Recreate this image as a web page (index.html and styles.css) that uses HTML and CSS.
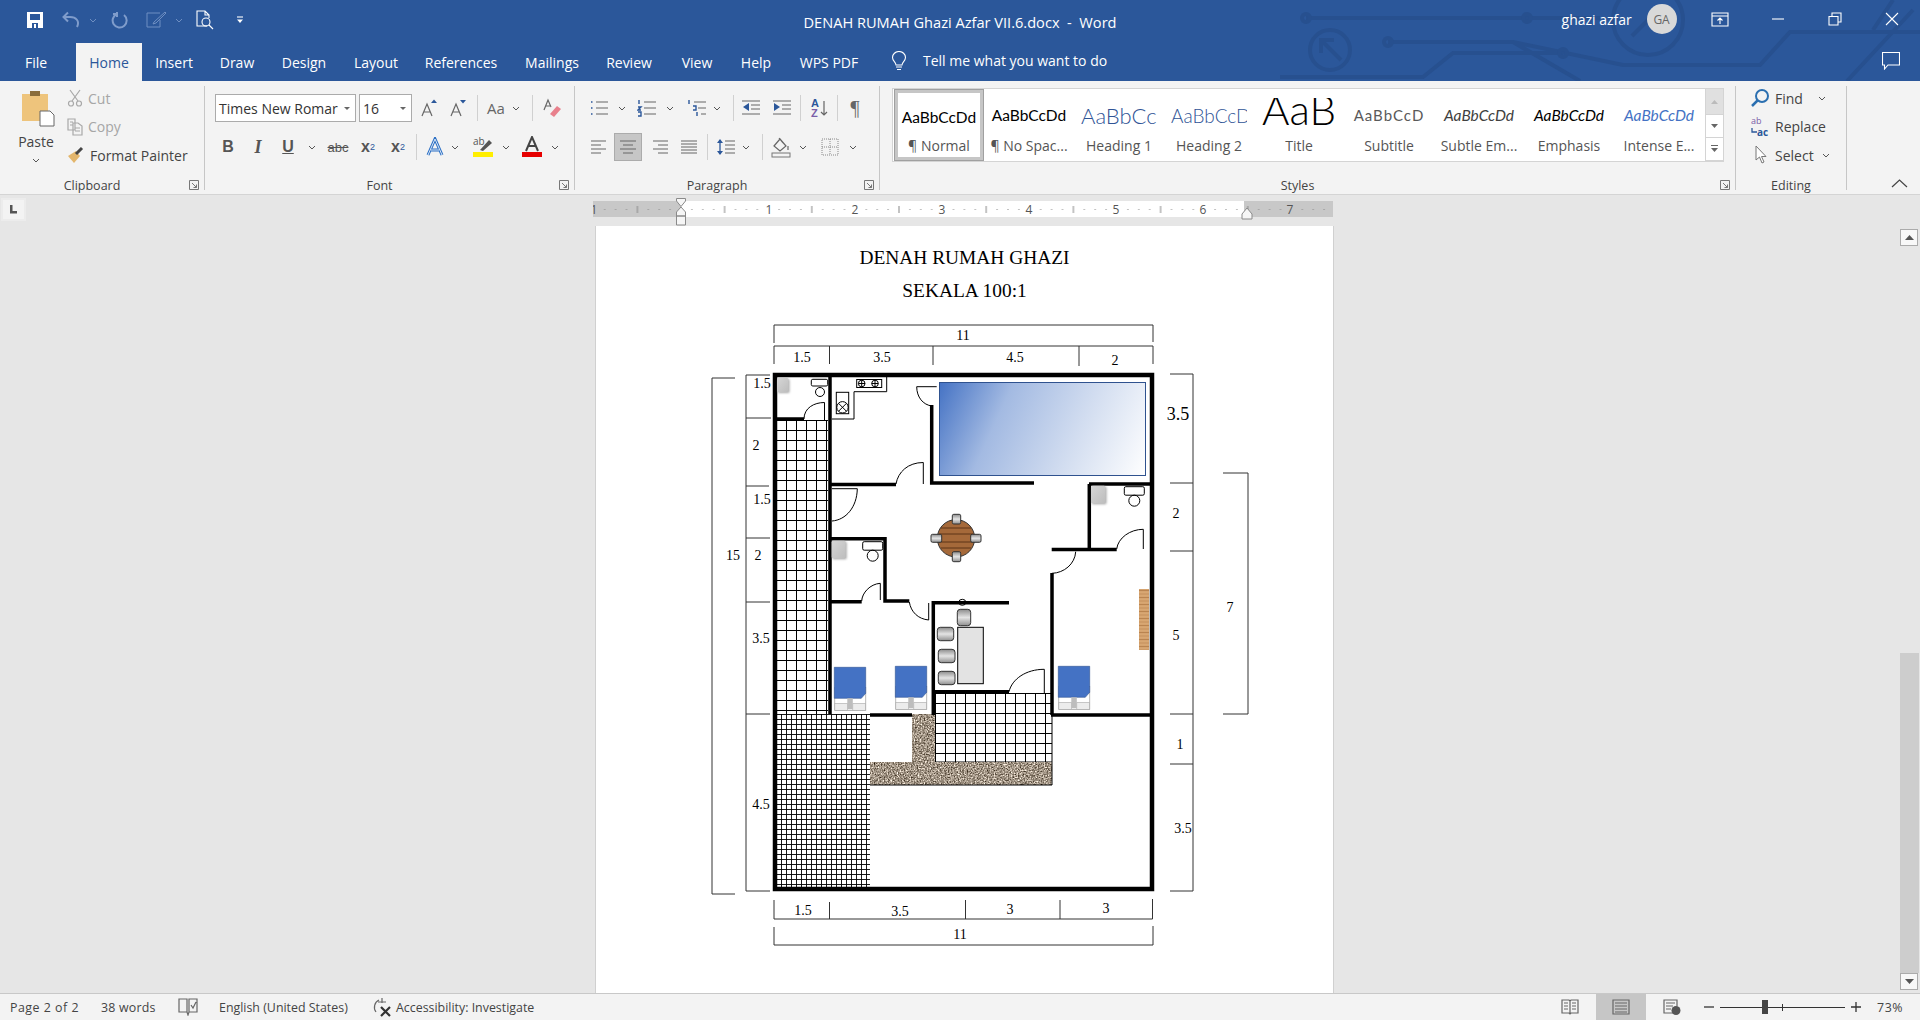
FILE: index.html
```html
<!DOCTYPE html>
<html>
  <head>
    <meta charset="utf-8">
    <title>DENAH RUMAH Ghazi Azfar VII.6.docx - Word</title>
    <link rel="stylesheet" href="styles.css">
  </head>
  <body>
    <header class="titlebar">
      <svg class="circuit" viewBox="1280 0 640 81" width="640" height="81">
        <path d="M1306 18H1600M1388 42H1513L1580 81M1280 77H1423L1453 53H1563M1513 42L1623 65H1760L1790 32H1920M1847 81L1913 10M1873 30L1893 0"/>
        <circle cx="1306" cy="18" r="4"/><circle cx="1527" cy="18" r="4"/><circle cx="1388" cy="42" r="4"/><circle cx="1563" cy="53" r="4"/>
        <circle cx="1330" cy="50" r="20" stroke-width="5"/>
        <path d="M1341 60L1323 42M1321 53V40H1334" stroke-width="5"/>
        <circle cx="1648" cy="20" r="35" stroke-width="7"/>
        <path d="M1632 36L1660 8" stroke-width="6"/>
      </svg>

      <div class="title-row">
        <div class="qat">
          <svg class="q-save" width="18" height="18" viewBox="0 0 18 18"><path class="w-fill" d="M1 1H17V17H1Z"/><path class="b-fill" d="M4 3H14V9H4ZM6 12H12V17H6Z"/><path class="w-fill" d="M8 13H10V17H8Z"/></svg>
          <svg class="q-undo" width="20" height="18" viewBox="0 0 20 18"><path class="dim-line" d="M16 16C19 10 15 6 9 6H3M7 1.5L2.5 6L7 10.5"/></svg>
          <svg class="chev q-c1" viewBox="0 0 8 5"><path class="dim-line" d="M1 1L4 4L7 1"/></svg>
          <svg class="q-redo" width="18" height="18" viewBox="0 0 18 18"><path class="dim-line" d="M6 3A7 7 0 1 0 13 4M6 1V6M2 3H6"/></svg>
          <svg class="q-pen" width="21" height="18" viewBox="0 0 21 18"><path class="dim-thin" d="M14 2H1V16H14V9M8 11L19 1L20 2L10 12L7 13Z"/></svg>
          <svg class="chev q-c2" viewBox="0 0 8 5"><path class="dim-line" d="M1 1L4 4L7 1"/></svg>
          <svg class="q-prev" width="18" height="20" viewBox="0 0 18 20"><path class="w-thin" d="M11 16H1V1H9L13 5V8M9 1V5H13"/><circle class="w-thin" cx="10" cy="12" r="4"/><path class="w-thin" d="M13 15L17 19"/></svg>
          <svg class="q-more" width="8" height="8" viewBox="0 0 8 8"><path class="w-thin" d="M1 1H7"/><path class="w-fill" d="M1 3.500H7L4 7Z"/></svg>
        </div>
        <div class="doc-title">DENAH RUMAH Ghazi Azfar VII.6.docx&nbsp; - &nbsp;Word</div>
        <div class="account">
          <span class="user-name">ghazi azfar</span>
          <span class="avatar">GA</span>
          <svg class="win-share" width="18" height="15" viewBox="0 0 18 15"><path class="w-thin" d="M1 1H17V14H1ZM1 4H17M9 12V6M6.500 8.500L9 6L11.500 8.500" stroke-width="1.300"/></svg>
          <svg class="win-min" width="12" height="2" viewBox="0 0 12 2"><path class="w-thin" d="M0 1H12"/></svg>
          <svg class="win-max" width="14" height="14" viewBox="0 0 14 14"><path class="w-thin" d="M1 4.500H10V13H1ZM4 4.500V1H13V10H10" stroke-width="1.200"/></svg>
          <svg class="win-close" width="14" height="14" viewBox="0 0 14 14"><path class="w-thin" d="M1 1L13 13M13 1L1 13" stroke-width="1.300"/></svg>
        </div>
      </div>

      <nav class="tab-row">
        <span class="tab tab-file">File</span>
        <span class="tab active">Home</span>
        <span class="tab">Insert</span>
        <span class="tab">Draw</span>
        <span class="tab">Design</span>
        <span class="tab">Layout</span>
        <span class="tab">References</span>
        <span class="tab">Mailings</span>
        <span class="tab">Review</span>
        <span class="tab">View</span>
        <span class="tab">Help</span>
        <span class="tab">WPS PDF</span>
        <svg class="bulb" width="16" height="20" viewBox="0 0 16 20"><path class="w-thin" d="M5 14C5 11 1.500 10 1.500 6.500A6.500 6 0 0 1 14.500 6.500C14.500 10 11 11 11 14ZM5 16H11M6 18.500H10"/></svg>
        <span class="tell-me">Tell me what you want to do</span>
        <svg class="comment" width="18" height="18" viewBox="0 0 18 18"><path class="w-thin" d="M.5 .5H17.500V13H6L2.500 17V13H.5Z"/></svg>
      </nav>
    </header>

    <section class="ribbon">
      <div class="group g-clip">
        <div class="clip-body">
          <div class="paste">
            <svg class="paste-ic" width="34" height="38" viewBox="0 0 34 38"><path d="M1 5H27V32H1Z" fill="#eec47c"/><path d="M9 2H19V7H9Z" fill="#8a6d3b"/><path d="M19 22H29L33 26V37H19Z" fill="#fff" stroke="#666"/></svg>
            <span>Paste</span>
            <svg class="chev" viewBox="0 0 8 5"><path d="M1 1L4 4L7 1"/></svg>
          </div>
          <div class="small-col">
            <div class="small-btn off"><svg width="16" height="18" viewBox="0 0 16 18"><path class="ln-off" d="M3 1L11 12M13 1L5 12"/><circle class="ln-off" cx="4" cy="14.500" r="2.500"/><circle class="ln-off" cx="12" cy="14.500" r="2.500"/></svg><span>Cut</span></div>
            <div class="small-btn off"><svg width="16" height="18" viewBox="0 0 16 18"><path class="ln-off" d="M1 1H8V12H1ZM6 5H11L15 8V17H6ZM3 4H6M3 7H6M8 10H13M8 13H13"/></svg><span>Copy</span></div>
            <div class="small-btn"><svg width="18" height="18" viewBox="0 0 18 18"><path d="M1 10L9 5L13 10L7 17Z" fill="#e3b66c"/><path d="M9 8L15 2" stroke="#444" stroke-width="3"/></svg><span>Format Painter</span></div>
          </div>
        </div>
        <div class="group-label">Clipboard</div>
        <svg class="launcher" viewBox="0 0 10 10"><path d="M.5 .5H9.500V9.500H.5ZM3 3L7.500 7.500M7.500 4.500V7.500H4.500"/></svg>
      </div>

      <div class="group g-font">
        <div class="rows">
          <div class="row row-combo">
            <div class="combo c-name"><span>Times New Romar</span><i class="drop"></i></div>
            <div class="combo c-size"><span>16</span><i class="drop"></i></div>
            <div class="ib m7"><svg width="18" height="18" viewBox="0 0 18 18"><path class="ln" d="M2 17L7 5L12 17M4 13H10"/><path d="M11 4L14 0.500L17 4Z" fill="#2b579a"/></svg></div>
            <div class="ib m9"><svg width="18" height="18" viewBox="0 0 18 18"><path class="ln" d="M2 17L7 5L12 17M4 13H10"/><path d="M11 1L14 4.500L17 1Z" fill="#2b579a"/></svg></div>
            <i class="sep m9"></i>
            <div class="ib m8 txt-ib">Aa</div>
            <svg class="chev m6" viewBox="0 0 8 5"><path d="M1 1L4 4L7 1"/></svg>
            <i class="sep m12"></i>
            <div class="ib m9"><svg width="20" height="20" viewBox="0 0 20 20"><path class="ln" d="M2 12L6 2L9 9M4 8H8"/><path d="M8 16L15 8L19 11L12 19Z" fill="#e8808c"/></svg></div>
          </div>
          <div class="row">
            <div class="ib m13 fmt b">B</div>
            <div class="ib m10 fmt i">I</div>
            <div class="ib m10 fmt u">U</div>
            <svg class="chev m10" viewBox="0 0 8 5"><path d="M1 1L4 4L7 1"/></svg>
            <div class="ib m12 fmt s">abc</div>
            <div class="ib m10 fmt b">x<sub>2</sub></div>
            <div class="ib m10 fmt b">x<sup>2</sup></div>
            <i class="sep m8"></i>
            <div class="ib m8"><svg width="20" height="20" viewBox="0 0 20 20"><path d="M3 18L10 2L17 18M6 13H14" fill="none" stroke="#2b6fc4" stroke-width="3"/><path d="M3 18L10 2L17 18M6 13H14" fill="none" stroke="#dbe7f6" stroke-width="1"/></svg></div>
            <svg class="chev m6" viewBox="0 0 8 5"><path d="M1 1L4 4L7 1"/></svg>
            <div class="ib m14"><svg width="22" height="22" viewBox="0 0 22 22"><text class="hl-ab" x="1" y="9">ab</text><path d="M8 14L17 4L20 7L11 15Z" fill="#555"/><rect x="1" y="16" width="20" height="5" fill="#ffee00"/></svg></div>
            <svg class="chev m9" viewBox="0 0 8 5"><path d="M1 1L4 4L7 1"/></svg>
            <div class="ib m12"><svg width="22" height="22" viewBox="0 0 22 22"><path d="M5 15L11 1L17 15M7 10H15" fill="none" stroke="#444" stroke-width="2"/><rect x="1" y="16" width="20" height="5" fill="#e60000"/></svg></div>
            <svg class="chev m9" viewBox="0 0 8 5"><path d="M1 1L4 4L7 1"/></svg>
          </div>
        </div>
        <div class="group-label">Font</div>
        <svg class="launcher" viewBox="0 0 10 10"><path d="M.5 .5H9.500V9.500H.5ZM3 3L7.500 7.500M7.500 4.500V7.500H4.500"/></svg>
      </div>

      <div class="group g-para">
        <div class="rows">
          <div class="row">
            <div class="ib m14"><svg width="20" height="18" viewBox="0 0 20 18"><path class="ln" d="M7 3H19M7 9H19M7 15H19"/><path class="dots" d="M2 3H3.500M2 9H3.500M2 15H3.500"/></svg></div>
            <svg class="chev m9" viewBox="0 0 8 5"><path d="M1 1L4 4L7 1"/></svg>
            <div class="ib m11"><svg width="20" height="18" viewBox="0 0 20 18"><path class="ln" d="M7 3H19M7 9H19M7 15H19"/><path class="dots" d="M2 1V5M1 8H4L1 11H4M1 13H4V17H1"/></svg></div>
            <svg class="chev m9" viewBox="0 0 8 5"><path d="M1 1L4 4L7 1"/></svg>
            <div class="ib m13"><svg width="20" height="18" viewBox="0 0 20 18"><path class="ln" d="M7 3H19M11 9H19M14 15H19"/><path class="dots" d="M2 1V5M6 7H9V11H6M10 13V17"/></svg></div>
            <svg class="chev m6" viewBox="0 0 8 5"><path d="M1 1L4 4L7 1"/></svg>
            <i class="sep m12"></i>
            <div class="ib m7"><svg width="20" height="18" viewBox="0 0 20 18"><path class="ln" d="M1 2H19M10 6H19M10 10H19M1 15H19"/><path d="M8 4V12L2 8Z" fill="#2b579a"/></svg></div>
            <div class="ib m11"><svg width="20" height="18" viewBox="0 0 20 18"><path class="ln" d="M1 2H19M10 6H19M10 10H19M1 15H19"/><path d="M2 4V12L8 8Z" fill="#2b579a"/></svg></div>
            <i class="sep m8"></i>
            <div class="ib m9"><svg width="20" height="20" viewBox="0 0 20 20"><text class="az a" x="1" y="9">A</text><text class="az z" x="1" y="19">Z</text><path class="ln" d="M14 3V17M11 14L14 17L17 14"/></svg></div>
            <i class="sep m7"></i>
            <div class="ib m7 pilcrow">¶</div>
          </div>
          <div class="row">
            <div class="ib m14"><svg width="18" height="14" viewBox="0 0 18 14"><path class="ln" d="M1 1H16M1 5H11M1 9H16M1 13H11"/></svg></div>
            <div class="ib on m5"><svg width="18" height="14" viewBox="0 0 18 14"><path class="ln" d="M1 1H17M4 5H14M1 9H17M4 13H14"/></svg></div>
            <div class="ib m8"><svg width="18" height="14" viewBox="0 0 18 14"><path class="ln" d="M2 1H17M7 5H17M2 9H17M7 13H17"/></svg></div>
            <div class="ib m9"><svg width="18" height="14" viewBox="0 0 18 14"><path class="ln" d="M1 1H17M1 4H17M1 7H17M1 10H17M1 13H17"/></svg></div>
            <i class="sep m8"></i>
            <div class="ib m8"><svg width="20" height="18" viewBox="0 0 20 18"><path class="ln" d="M9 3H19M9 7H19M9 11H19M9 15H19"/><path class="blue-ln" d="M4 2V16"/><path d="M1 5L4 1L7 5ZM1 13L4 17L7 13Z" fill="#2b579a"/></svg></div>
            <svg class="chev m6" viewBox="0 0 8 5"><path d="M1 1L4 4L7 1"/></svg>
            <i class="sep m12"></i>
            <div class="ib m8"><svg width="20" height="22" viewBox="0 0 20 22"><path class="ln" d="M3 10L9 3L15 10L9 15ZM8 2L12 7M17 10V14"/><rect x="1" y="17" width="18" height="4" fill="none" stroke="#777"/></svg></div>
            <svg class="chev m8" viewBox="0 0 8 5"><path d="M1 1L4 4L7 1"/></svg>
            <div class="ib m13"><svg width="18" height="18" viewBox="0 0 18 18"><path class="dotted" d="M1 1H17V17H1ZM9 1V17M1 9H17"/></svg></div>
            <svg class="chev m9" viewBox="0 0 8 5"><path d="M1 1L4 4L7 1"/></svg>
          </div>
        </div>
        <div class="group-label">Paragraph</div>
        <svg class="launcher" viewBox="0 0 10 10"><path d="M.5 .5H9.500V9.500H.5ZM3 3L7.500 7.500M7.500 4.500V7.500H4.500"/></svg>
      </div>

      <div class="group g-styles">
        <div class="gallery">
          <div class="style-item selected"><span class="pv pv-normal">AaBbCcDd</span><span class="st-name">¶ Normal</span></div>
          <div class="style-item"><span class="pv pv-normal">AaBbCcDd</span><span class="st-name">¶ No Spac...</span></div>
          <div class="style-item"><span class="pv pv-h1">AaBbCc</span><span class="st-name">Heading 1</span></div>
          <div class="style-item"><span class="pv pv-h2">AaBbCcD</span><span class="st-name">Heading 2</span></div>
          <div class="style-item"><span class="pv pv-title">AaB</span><span class="st-name">Title</span></div>
          <div class="style-item"><span class="pv pv-sub">AaBbCcD</span><span class="st-name">Subtitle</span></div>
          <div class="style-item"><span class="pv pv-em pv-subtle">AaBbCcDd</span><span class="st-name">Subtle Em...</span></div>
          <div class="style-item"><span class="pv pv-em">AaBbCcDd</span><span class="st-name">Emphasis</span></div>
          <div class="style-item"><span class="pv pv-em pv-intense">AaBbCcDd</span><span class="st-name">Intense E...</span></div>
          <div class="gallery-arrows">
            <span class="ga ga-up"><svg width="7" height="4" viewBox="0 0 7 4"><path d="M0 4L3.500 0L7 4Z" fill="#bbb"/></svg></span>
            <span class="ga"><svg width="7" height="4" viewBox="0 0 7 4"><path d="M0 0L3.500 4L7 0Z" fill="#666"/></svg></span>
            <span class="ga"><svg width="9" height="8" viewBox="0 0 9 8"><path d="M1 .5H8" stroke="#666"/><path d="M1 3L4.500 7L8 3Z" fill="#666"/></svg></span>
          </div>
        </div>
        <div class="group-label">Styles</div>
        <svg class="launcher" viewBox="0 0 10 10"><path d="M.5 .5H9.500V9.500H.5ZM3 3L7.500 7.500M7.500 4.500V7.500H4.500"/></svg>
      </div>

      <div class="group g-edit">
        <div class="small-col">
          <div class="small-btn"><svg width="20" height="20" viewBox="0 0 20 20"><circle cx="12" cy="8" r="6" fill="none" stroke="#2b6fb0" stroke-width="2"/><path d="M8 12L2 18" stroke="#2b6fb0" stroke-width="2.500"/></svg><span>Find</span><svg class="chev find-chev" viewBox="0 0 8 5"><path d="M1 1L4 4L7 1"/></svg></div>
          <div class="small-btn"><svg width="20" height="20" viewBox="0 0 20 20"><text class="rep-ab" x="1" y="7">ab</text><text class="rep-ac" x="7" y="19">ac</text><path class="blue-ln" d="M2 11V15H7"/></svg><span>Replace</span></div>
          <div class="small-btn"><svg width="20" height="20" viewBox="0 0 20 20"><path class="ln-cur" d="M6 1V15L9.500 12L12 18L14 17L11.500 11.500H16Z"/></svg><span>Select</span><svg class="chev sel-chev" viewBox="0 0 8 5"><path d="M1 1L4 4L7 1"/></svg></div>
        </div>
        <div class="group-label plain">Editing</div>
      </div>

      <svg class="collapse" width="17" height="9" viewBox="0 0 17 9"><path d="M1 8L8.500 1L16 8" fill="none" stroke="#444" stroke-width="1.200"/></svg>
    </section>

    <main class="workspace">
      <div class="ruler-row">
        <div class="tab-stop"><svg width="9" height="9" viewBox="0 0 9 9"><path d="M1 0H3.500V6H8V8.500H1Z" fill="#555"/></svg></div>
        <svg class="ruler" width="745" height="31" viewBox="593 195 745 31">
          <defs>
            <pattern id="ticks" x="681" y="201" width="87.2" height="16" patternUnits="userSpaceOnUse">
              <path class="tick" d="M10.900 8v1M21.800 8v1M32.700 8v1M43.600 5v7M54.500 8v1M65.400 8v1M76.300 8v1"/>
            </pattern>
          </defs>
          <rect x="593" y="201" width="740" height="16" fill="#c8c8c8"/>
          <rect x="681" y="201" width="563" height="16" fill="#fff"/>
          <rect x="593" y="201" width="740" height="16" fill="url(#ticks)"/>
          <g class="ruler-num">
            <text x="594" y="214">1</text><text x="769" y="214">1</text><text x="855" y="214">2</text><text x="942" y="214">3</text><text x="1029" y="214">4</text><text x="1116" y="214">5</text><text x="1203" y="214">6</text><text x="1290" y="214">7</text>
          </g>
          <path class="marker" d="M676.500 198.500H685.500V201L681 206.500L676.500 201ZM676.500 216V212L681 207L685.500 212V216ZM676.500 216H685.500V225H676.500Z"/>
          <path class="marker" d="M1247 208L1252 214V219H1242V214Z"/>
        </svg>
      </div>

      <div class="doc-row">
        <div class="page">
          <svg class="plan" width="737" height="767" viewBox="596 226 737 767">
            <defs>
              <pattern id="tile" x="776" y="420" width="10" height="10" patternUnits="userSpaceOnUse"><path d="M0 .5H10M.5 0V10" stroke="#000"/></pattern>
              <pattern id="tile2" x="935" y="693" width="10" height="10" patternUnits="userSpaceOnUse"><path d="M0 .5H10M.5 0V10" stroke="#000"/></pattern>
              <pattern id="fine" x="776" y="714" width="5" height="5" patternUnits="userSpaceOnUse"><path d="M0 .5H5M.5 0V5" stroke="#000" stroke-width=".9"/></pattern>
              <pattern id="wood" x="1139" y="589" width="10" height="7" patternUnits="userSpaceOnUse"><rect width="10" height="7" fill="#d8a772"/><path d="M0 1.500H10" stroke="#b98450" stroke-width="1.200"/><path d="M0 5H10" stroke="#c48f5b"/></pattern>
              <filter id="gravel" x="0" y="0" width="100%" height="100%" color-interpolation-filters="sRGB"><feTurbulence type="fractalNoise" baseFrequency=".7" numOctaves="2" seed="4"/><feColorMatrix values="1.300 0 0 0 -.02  1.300 0 0 0 -.07  1.300 0 0 0 -.13  0 0 0 0 1"/></filter>
              <linearGradient id="pool" gradientUnits="userSpaceOnUse" x1="939" y1="382" x2="1146" y2="476"><stop offset="0" stop-color="#4472c4"/><stop offset=".3" stop-color="#a3bae2"/><stop offset=".65" stop-color="#d2ddf0"/><stop offset="1" stop-color="#fff"/></linearGradient>
              <linearGradient id="seat" x1="0" y1="0" x2="0" y2="1"><stop offset="0" stop-color="#8c8c8c"/><stop offset=".5" stop-color="#e4e4e4"/><stop offset="1" stop-color="#8f8f8f"/></linearGradient>
              <linearGradient id="basin" x1="0" y1="0" x2="1" y2="1"><stop offset="0" stop-color="#d6d6d6"/><stop offset="1" stop-color="#bdbdbd"/></linearGradient>
              <g id="toilet"><rect class="thin" x="0" y="0" width="20" height="8.500" rx="1.500"/><circle class="thin" cx="10" cy="14" r="5.500"/></g>
              <g id="bed">
                <rect class="bed-frame" x=".5" y="20" width="31" height="23"/>
                <path class="bed-blue" d="M0 0H31.400V26L27 31H0Z"/>
                <rect class="bed-pillow" x=".5" y="36" width="12.500" height="7"/>
                <rect class="bed-pillow" x="18.500" y="36" width="12.500" height="7"/>
                <rect x="13" y="31" width="5.500" height="11" fill="#bdbdbd"/>
              </g>
            </defs>

            <text class="head" x="964.500" y="264">DENAH RUMAH GHAZI</text>
            <text class="head" x="964.500" y="297">SEKALA 100:1</text>

            <path class="dim" d="M774 343V325H1153V342M774 364V346H1153V364M829.500 346V364M933 346V365M1079 346V366"/>
            <path class="dim" d="M735 378H712V894H735M770 375H746V891H770M746 418H771M746 486H769M746 538H770M746 602H770M746 714H770"/>
            <path class="dim" d="M1170 374H1193V891H1170M1170 483H1193M1170 551H1193M1170 714H1193M1170 764H1193"/>
            <path class="dim" d="M1223 473H1248V714H1223"/>
            <path class="dim" d="M774 900V919H1152.500V899M829.500 902V919M965.500 900V919M1060 900V919M774 927V945H1153V926"/>

            <g class="dim-text">
              <text x="963" y="340">11</text><text x="802" y="362">1.5</text><text x="882" y="362">3.5</text><text x="1015" y="362">4.5</text><text x="1115" y="365">2</text>
              <text x="762" y="388">1.5</text><text x="756" y="450">2</text><text x="762" y="504">1.5</text><text x="758" y="560">2</text><text x="733" y="560">15</text><text x="761" y="643">3.5</text><text x="761" y="809">4.5</text>
              <text x="1176" y="518">2</text><text x="1176" y="640">5</text><text x="1180" y="749">1</text><text x="1183" y="833">3.5</text><text x="1230" y="612">7</text>
              <text x="803" y="915">1.5</text><text x="900" y="916">3.5</text><text x="1010" y="914">3</text><text x="1106" y="913">3</text><text x="960" y="939">11</text>
              <text class="big" x="1178" y="420">3.5</text>
            </g>

            <rect x="776" y="420" width="52" height="294" fill="url(#tile)"/>
            <rect x="935" y="693" width="117" height="69" fill="url(#tile2)"/>
            <path class="thin" d="M1052 693V762M935 762H1052"/>
            <rect x="776" y="714" width="94" height="173" fill="url(#fine)"/>
            <rect x="912" y="714" width="23" height="48" filter="url(#gravel)"/>
            <rect x="870" y="762" width="182" height="23" filter="url(#gravel)"/>
            <path class="thin" d="M870 785H1052V762"/>

            <rect class="pool" x="939.500" y="382.500" width="206" height="93" fill="url(#pool)"/>

            <path class="wall" d="M775 419H804M830 375V714M830 484.500H896M931.700 405V483H1034"/>
            <path class="wall" d="M830 538.700H885V601H909.300M830 601.700H861.700M933.300 601V715M932 602.700H1009M932 691.700H1009"/>
            <path class="wall" d="M1089.300 484V549.500M1089 484H1152M1051.700 549.500H1116.700M1052 573V715M1051 715H1152M870 715H912"/>
            <rect class="outer" x="775" y="375" width="377" height="514"/>

            <path class="thin" d="M804 419C804 408 814 402.500 824.500 402.500V420"/>
            <path class="thin" d="M896 484C898 472 908 462.500 923.300 462.500V484"/>
            <path class="thin" d="M936.700 386.700H916.700C916.700 397 923 405 932 406"/>
            <path class="thin" d="M857.300 488.700H832M857.300 488.700C857 507 846 520 832 521"/>
            <path class="thin" d="M861.700 601C862 593 870 584 880.300 583.300V600"/>
            <path class="thin" d="M909.300 602C911 612 918 619 928.700 620V603"/>
            <path class="thin" d="M1116.700 549C1118 538 1130 529.300 1143.300 529.300V549"/>
            <path class="thin" d="M1075.700 551.700C1075 564 1064 573 1052 573.300"/>
            <path class="thin" d="M1009 691.700C1012 679 1026 669.300 1044.300 669.300V693"/>

            <path class="thin" d="M832 376H886.700V391.700H854V419H832"/>
            <rect class="thin" x="856.700" y="379.500" width="25" height="8"/>
            <circle class="thin" cx="861.700" cy="383.500" r="3.300"/><circle class="thin" cx="875" cy="383.500" r="3.300"/>
            <path class="thin" d="M858.400 383.500H865M861.700 380.200V386.800M871.700 383.500H878.300M875 380.200V386.800"/>
            <rect class="thin" x="836.300" y="392.300" width="12.400" height="21.400"/>
            <circle class="thin" cx="842.500" cy="407.300" r="5.700"/>
            <path class="thin" d="M838.500 403.300L846.500 411.300M846.500 403.300L838.500 411.300"/>

            <rect class="thin" x="811.300" y="379.300" width="16.400" height="6.700" rx="1.500"/>
            <circle class="thin" cx="820" cy="392" r="4.500"/>
            <use href="#toilet" x="862.700" y="541.700"/>
            <use href="#toilet" x="1124.300" y="486.700"/>
            <rect class="basin" x="777" y="378" width="11.500" height="14" rx="1.500"/>
            <rect class="basin" x="831.700" y="540.700" width="14" height="17.500" rx="1.500"/>
            <rect class="basin" x="1091" y="485.700" width="14.500" height="17.500" rx="1.500"/>

            <circle class="wood-top" cx="956" cy="538.300" r="18.700"/>
            <path class="grain" d="M939 534H973M938 542H974M941 528H971M941 548H971"/>
            <rect class="seat" x="952.300" y="514.300" width="8.400" height="9.700" rx="1.500"/>
            <rect class="seat" x="952.300" y="551.700" width="8.400" height="10" rx="1.500"/>
            <rect class="seat" x="931" y="534.300" width="10.700" height="8" rx="1.500"/>
            <rect class="seat" x="970.700" y="534.300" width="10.300" height="8" rx="1.500"/>

            <rect x="1139" y="589" width="10" height="61" fill="url(#wood)"/>

            <ellipse class="thin" cx="962.300" cy="602.300" rx="3.500" ry="3"/>
            <rect class="table" x="957.700" y="627.300" width="25.600" height="56.400"/>
            <rect class="seat" x="957.300" y="609.300" width="13.400" height="16.400" rx="3"/>
            <rect class="seat" x="937.300" y="627.300" width="16.400" height="13.400" rx="3"/>
            <rect class="seat" x="938.300" y="649.300" width="16.700" height="13.400" rx="3"/>
            <rect class="seat" x="938.300" y="671.300" width="16.700" height="13.400" rx="3"/>

            <use href="#bed" x="834.300" y="667.300"/>
            <use href="#bed" x="895.300" y="666.300"/>
            <use href="#bed" x="1058.300" y="666.300"/>
          </svg>
        </div>
        <div class="vscroll">
          <span class="sb-btn"><svg width="9" height="5" viewBox="0 0 9 5"><path d="M0 5L4.500 0L9 5Z" fill="#555"/></svg></span>
          <span class="sb-thumb"></span>
          <span class="sb-btn"><svg width="9" height="5" viewBox="0 0 9 5"><path d="M0 0L4.500 5L9 0Z" fill="#555"/></svg></span>
        </div>
      </div>
    </main>

    <footer class="statusbar">
      <span class="st-page">Page 2 of 2</span>
      <span class="st-words">38 words</span>
      <svg class="st-proof" width="20" height="18" viewBox="0 0 20 18"><path class="ln" d="M1 1H9V14H1ZM11 1H19V14H11ZM9 14L10 17L11 14M13 7L15 10L18 4"/></svg>
      <span class="st-lang">English (United States)</span>
      <svg class="st-acc" width="20" height="20" viewBox="0 0 20 20"><path class="ln" d="M9 1V6M5 5H13M6 3A8 8 0 0 0 3 15"/><path d="M8 10L17 19M17 10L8 19" stroke="#333" stroke-width="2.200"/></svg>
      <span class="st-acc-text">Accessibility: Investigate</span>
      <div class="st-right">
        <svg class="v-read" width="18" height="16" viewBox="0 0 18 16"><path class="ln" d="M1 1H8L9 2L10 1H17V14H10L9 15L8 14H1ZM9 2V15M3 4H7M3 7H7M3 10H7M11 4H15M11 7H15M11 10H15"/></svg>
        <span class="v-print"><svg width="18" height="16" viewBox="0 0 18 16"><path class="ln" d="M1 1H17V15H1ZM3 4H15M3 7H15M3 10H15M3 13H15"/></svg></span>
        <svg class="v-web" width="18" height="16" viewBox="0 0 18 16"><path class="ln" d="M10 14H1V1H14V7M3 4H12M3 7H10M3 10H8"/><circle cx="13" cy="11.500" r="4.500" fill="#555"/></svg>
        <svg class="z-minus" width="10" height="2" viewBox="0 0 10 2"><path class="ln-dark" d="M0 1H10"/></svg>
        <div class="slider"><i class="slider-mid"></i><i class="slider-thumb"></i></div>
        <svg class="z-plus" width="10" height="10" viewBox="0 0 10 10"><path class="ln-dark" d="M0 5H10M5 0V10"/></svg>
        <span class="z-val">73%</span>
      </div>
    </footer>
  </body>
</html>
```

FILE: styles.css
```css
* {
  box-sizing: border-box;
}

body {
  margin: 0;
  width: 1920px;
  height: 1020px;
  overflow: hidden;
  display: flex;
  flex-direction: column;
  font-family: "Open Sans", "Noto Sans", sans-serif;
  font-size: 13px;
  color: #444;
  background-color: #e6e6e6;
}

svg {
  display: block;
  flex: none;
}

/* shared icon strokes */
.w-fill { fill: #fff; }
.b-fill { fill: #2b579a; }
.w-thin { fill: none; stroke: #fff; stroke-width: 1.1; }
.dim-line { fill: none; stroke: #7f9ccb; stroke-width: 2; }
.dim-thin { fill: none; stroke: #6f8fc2; stroke-width: 1; }
.ln { fill: none; stroke: #666; stroke-width: 1.2; }
.ln-off { fill: none; stroke: #a8a8a8; stroke-width: 1.2; }
.ln-cur { fill: #fff; stroke: #777; stroke-width: 1; }
.ln-dark { fill: none; stroke: #333; stroke-width: 1.3; }
.dots { fill: none; stroke: #2b579a; stroke-width: 1.4; }
.blue-ln { fill: none; stroke: #2b579a; stroke-width: 1.3; }
.dotted { fill: none; stroke: #888; stroke-width: 1; stroke-dasharray: 1 1; }

/* title bar */
.titlebar {
  position: relative;
  height: 81px;
  flex: none;
  background-color: #2b579a;
  color: #fff;
}

.circuit {
  position: absolute;
  top: 0;
  left: 1280px;
}

.circuit path,
.circuit circle {
  fill: none;
  stroke: #27508f;
  stroke-width: 4;
}

.title-row {
  position: relative;
  height: 40px;
  display: grid;
  grid-template-columns: 1fr auto 1fr;
  align-items: center;
}

.qat {
  display: flex;
  align-items: center;
}

.q-save { margin-left: 26px; }
.q-undo { margin-left: 17px; }
.q-c1 { margin-left: 8px; }
.q-redo { margin-left: 14px; }
.q-pen { margin-left: 17px; }
.q-c2 { margin-left: 8px; }
.q-prev { margin-left: 13px; }
.q-more { margin-left: 22px; }

.doc-title {
  font-size: 14.600px;
  position: relative;
  top: 2px;
}

.account {
  display: flex;
  align-items: center;
  justify-content: flex-start;
  height: 40px;
  padding-bottom: 2px;
}

.user-name {
  margin-left: 445px;
  width: 85px;
  font-size: 14px;
  white-space: nowrap;
}

.avatar {
  width: 30px;
  height: 30px;
  margin-left: 0;
  border-radius: 50%;
  background-color: #d9d9d9;
  color: #666;
  font-size: 12px;
  display: flex;
  align-items: center;
  justify-content: center;
}

.win-share { margin-left: 34px; }
.win-min { margin-left: 43px; }
.win-max { margin-left: 44px; }
.win-close { margin-left: 43px; }

.tab-row {
  position: relative;
  height: 41px;
  display: grid;
  grid-template-columns: 76px 66px 64px 62px 72px 72px 98px 84px 70px 66px 52px 94px 47px auto 1fr;
  align-items: center;
  font-size: 14px;
}

.tab {
  height: 38px;
  margin-top: 3px;
  display: flex;
  align-items: center;
  justify-content: center;
  white-space: nowrap;
}

.tab-file {
  padding-right: 4px;
}

.tab.active {
  background-color: #f3f3f3;
  color: #2b579a;
}

.bulb {
  margin-left: 15px;
}

.comment {
  justify-self: end;
  margin-right: 20px;
}

/* ribbon */
.ribbon {
  position: relative;
  height: 114px;
  flex: none;
  display: flex;
  align-items: flex-start;
  background-color: #f3f3f3;
  border-bottom: 1px solid #d4d4d4;
}

.group {
  position: relative;
  height: 104px;
  margin-top: 5px;
  border-right: 1px solid #c6c6c6;
  flex: none;
}

.g-clip { width: 205px; }
.g-font { width: 370px; }
.g-para { width: 305px; }
.g-styles { width: 856px; }
.g-edit { width: 111px; padding-left: 14px; }

.group-label {
  position: absolute;
  left: 0;
  right: 0;
  bottom: -5px;
  padding-right: 20px;
  text-align: center;
  font-size: 12.500px;
  line-height: 18px;
}

.group-label.plain {
  padding-right: 0;
}

.launcher {
  position: absolute;
  right: 5px;
  bottom: 0;
  width: 10px;
  height: 10px;
}

.launcher path {
  fill: none;
  stroke: #777;
}

.clip-body {
  display: flex;
}

.paste {
  padding: 3px 0 0 10px;
  display: flex;
  flex-direction: column;
  align-items: center;
  width: 62px;
  font-size: 14px;
}

.paste-ic {
  margin-left: 4px;
}

.paste span {
  line-height: 22px;
  margin-top: 4px;
}

.small-col {
  margin-top: -2px;
  display: flex;
  flex-direction: column;
}

.small-btn {
  height: 28.500px;
  display: flex;
  align-items: center;
  gap: 5px;
  font-size: 14px;
  white-space: nowrap;
}

.g-clip .small-col {
  margin-left: 5px;
}

.small-btn.off {
  color: #a6a6a6;
}

.find-chev {
  margin-left: 10px;
}

.sel-chev {
  margin-left: 3px;
}

.chev {
  width: 8px;
  height: 5px;
  flex: none;
}

.chev path {
  fill: none;
  stroke: #555;
  stroke-width: 1;
}

.chev .dim-line {
  stroke: #6f8fc2;
}

.paste .chev {
  margin-top: 5px;
}

.rows {
  padding-top: 8px;
}

.row {
  height: 28px;
  display: flex;
  align-items: center;
  margin-bottom: 11px;
}

.row-combo {
  padding-left: 10px;
}

.combo {
  height: 28px;
  display: flex;
  align-items: center;
  justify-content: space-between;
  padding: 0 5px 0 3px;
  background-color: #fff;
  border: 1px solid #ababab;
  font-size: 14px;
  white-space: nowrap;
  color: #333;
}

.c-name { width: 141px; }
.c-size { width: 53px; margin-left: 3px; }

.drop {
  width: 0;
  height: 0;
  flex: none;
  border-left: 3px solid transparent;
  border-right: 3px solid transparent;
  border-top: 3px solid #666;
}

.ib {
  width: 20px;
  height: 28px;
  flex: none;
  display: flex;
  align-items: center;
  justify-content: center;
}

.ib.on {
  width: 28px;
  background-color: #c6c6c6;
  border: 1px solid #ababab;
}

.sep {
  width: 1px;
  height: 26px;
  flex: none;
  background-color: #d0d0d0;
}

.m5 { margin-left: 5px; }
.m6 { margin-left: 6px; }
.m7 { margin-left: 7px; }
.m8 { margin-left: 8px; }
.m9 { margin-left: 9px; }
.m10 { margin-left: 10px; }
.m11 { margin-left: 11px; }
.m12 { margin-left: 12px; }
.m13 { margin-left: 13px; }
.m14 { margin-left: 14px; }

.txt-ib {
  font-size: 15px;
  color: #666;
}

.fmt {
  font-family: "Liberation Sans", sans-serif;
  font-size: 16px;
  color: #555;
}

.fmt.b { font-weight: bold; }
.fmt.i { font-family: "Liberation Serif", serif; font-style: italic; font-weight: bold; font-size: 18px; }
.fmt.u { font-weight: bold; text-decoration: underline; }
.fmt.s { font-size: 13px; text-decoration: line-through; }

.fmt sub,
.fmt sup {
  font-size: 9px;
  font-weight: normal;
  color: #2b579a;
  line-height: 0;
}

.hl-ab {
  font-size: 10px;
  fill: #555;
}

.az {
  font-family: "Liberation Sans", sans-serif;
  font-size: 11px;
  font-weight: bold;
}

.az.a { fill: #2b579a; }
.az.z { fill: #7a5ea8; }

.pilcrow {
  font-family: "Liberation Serif", serif;
  font-size: 20px;
  color: #666;
}

.gallery {
  height: 74px;
  width: 832px;
  margin: 2px 0 0 12px;
  padding-left: 1px;
  display: flex;
  background-color: #fff;
  border: 1px solid #d4d4d4;
}

.style-item {
  width: 90px;
  height: 72px;
  flex: none;
  display: flex;
  flex-direction: column;
  align-items: center;
  overflow: hidden;
  position: relative;
}

.style-item.selected {
  border: 4px solid #c6c6c6;
  outline: 1px solid #a0a0a0;
  outline-offset: -1px;
}

.pv {
  height: 46px;
  padding-top: 6px;
  display: flex;
  align-items: center;
  justify-content: center;
  font-family: "Lato", sans-serif;
  color: #000;
  white-space: nowrap;
  font-size: 15.500px;
  width: 80px;
  overflow: hidden;
}

.style-item.selected .pv {
  height: 42px;
}

.pv-h1 { width: 76px; font-size: 22px; color: #2f5496; font-weight: 300; justify-content: flex-start; }
.pv-h2 { width: 76px; font-size: 19px; color: #2f5496; font-weight: 300; justify-content: flex-start; }
.pv-title {
  padding: 0 0 6px;
  font-size: 42px;
  font-weight: 300;
  overflow: visible;
  clip-path: inset(9px -10px 0 -10px);
}
.pv-sub { color: #5a5a5a; letter-spacing: 1px; font-size: 15px; }
.pv-em { font-style: italic; }
.pv-subtle { color: #404040; }
.pv-intense { color: #4472c4; }

.st-name {
  font-size: 14px;
  color: #555;
  line-height: 22px;
  white-space: nowrap;
}

.gallery-arrows {
  margin-left: 1px;
  width: 18px;
  flex: none;
  display: flex;
  flex-direction: column;
}

.ga {
  flex: 1;
  display: flex;
  align-items: center;
  justify-content: center;
  border-left: 1px solid #d4d4d4;
  border-bottom: 1px solid #d4d4d4;
}

.ga-up {
  flex: 1.150;
  background-color: #e0e0e0;
}

.rep-ab {
  font-size: 9px;
  fill: #7a5ea8;
}

.rep-ac {
  font-size: 10px;
  font-weight: bold;
  fill: #2b579a;
}

.collapse {
  position: absolute;
  left: 1891px;
  top: 98px;
}

/* ruler and document */
.workspace {
  flex: 1;
  min-height: 0;
  display: flex;
  flex-direction: column;
}

.ruler-row {
  position: relative;
  height: 31px;
  flex: none;
}

.tab-stop {
  position: absolute;
  top: 5px;
  left: 3px;
  width: 21px;
  height: 19px;
  display: flex;
  align-items: center;
  justify-content: center;
  background-color: #f3f3f3;
  outline: 2px solid #ececec;
}

.ruler {
  position: absolute;
  top: 0;
  left: 593px;
}

.tick {
  fill: none;
  stroke: #888;
  stroke-width: 1;
}

.ruler-num text {
  font-family: "Open Sans", sans-serif;
  font-size: 12px;
  text-anchor: middle;
  fill: #555;
}

.marker {
  fill: #f6f6f6;
  stroke: #8a8a8a;
  stroke-width: 1;
}

.doc-row {
  flex: 1;
  min-height: 0;
  display: flex;
  padding-left: 596px;
}

.page {
  width: 737px;
  height: 767px;
  background-color: #fff;
  box-shadow: -1px 0 0 #d0d0d0, 1px 0 0 #d0d0d0;
}

.vscroll {
  width: 19px;
  margin-left: 567px;
  padding-top: 3px;
  display: flex;
  flex-direction: column;
}

.sb-btn {
  width: 18px;
  height: 17px;
  display: flex;
  align-items: center;
  justify-content: center;
  background-color: #f8f8f8;
  border: 1px solid #ababab;
}

.sb-thumb {
  width: 19px;
  height: 320px;
  margin-top: auto;
  background-color: #cdcdcd;
}

.vscroll .sb-btn:last-child {
  margin-bottom: 3px;
}

/* floor plan */
.plan text {
  font-family: "Liberation Serif", serif;
  text-anchor: middle;
  fill: #000;
}

.plan .head {
  font-size: 19.400px;
}

.dim-text text {
  font-size: 14px;
}

.dim-text .big {
  font-size: 18px;
}

.dim {
  fill: none;
  stroke: #333;
  stroke-width: 1;
}

.thin {
  fill: #fff;
  fill-opacity: 0;
  stroke: #000;
  stroke-width: 1;
}

.wall {
  fill: none;
  stroke: #000;
  stroke-width: 3.500;
}

.outer {
  fill: none;
  stroke: #000;
  stroke-width: 4.500;
}

.pool {
  stroke: #2f528f;
  stroke-width: 1;
}

.basin {
  fill: url(#basin);
  filter: drop-shadow(1px 1px 1px #aaa);
}

.wood-top {
  fill: #a5693a;
  stroke: #333;
  stroke-width: 1;
}

.grain {
  fill: none;
  stroke: #5c3517;
  stroke-width: 1;
}

.seat {
  fill: url(#seat);
  stroke: #333;
  stroke-width: 1;
}

.table {
  fill: #e3e3e3;
  stroke: #000;
  stroke-width: 1;
}

.bed-frame {
  fill: #fff;
  stroke: #888;
  stroke-width: .6;
}

.bed-blue {
  fill: #4472c4;
  stroke: #2f528f;
  stroke-width: .6;
}

.bed-pillow {
  fill: #ececec;
  stroke: #aaa;
  stroke-width: .6;
}

/* status bar */
.statusbar {
  height: 27px;
  flex: none;
  display: flex;
  align-items: center;
  background-color: #f3f3f3;
  border-top: 1px solid #c8c8c8;
  font-size: 12.400px;
  white-space: nowrap;
}

.st-page { margin-left: 10px; width: 91px; letter-spacing: .5px; }
.st-words { width: 77px; letter-spacing: .2px; }
.st-proof { width: 20px; }
.st-lang { margin-left: 21px; width: 154px; }
.st-acc-text { margin-left: 3px; }

.st-right {
  margin-left: auto;
  height: 100%;
  display: flex;
  align-items: center;
}

.v-read { margin-right: 17px; }

.v-print {
  width: 50px;
  height: 100%;
  display: flex;
  align-items: center;
  justify-content: center;
  background-color: #c6c6c6;
}

.v-web { margin-left: 17px; }
.z-minus { margin-left: 23px; }

.slider {
  position: relative;
  width: 125px;
  height: 1px;
  margin-left: 6px;
  background-color: #333;
}

.slider-mid {
  position: absolute;
  left: 62px;
  top: -3px;
  width: 1px;
  height: 7px;
  background-color: #333;
}

.slider-thumb {
  position: absolute;
  left: 42px;
  top: -7px;
  width: 6px;
  height: 14px;
  background-color: #444;
}

.z-plus { margin-left: 6px; }

.z-val {
  margin-left: 16px;
  margin-right: 17px;
  letter-spacing: .5px;
}
```
